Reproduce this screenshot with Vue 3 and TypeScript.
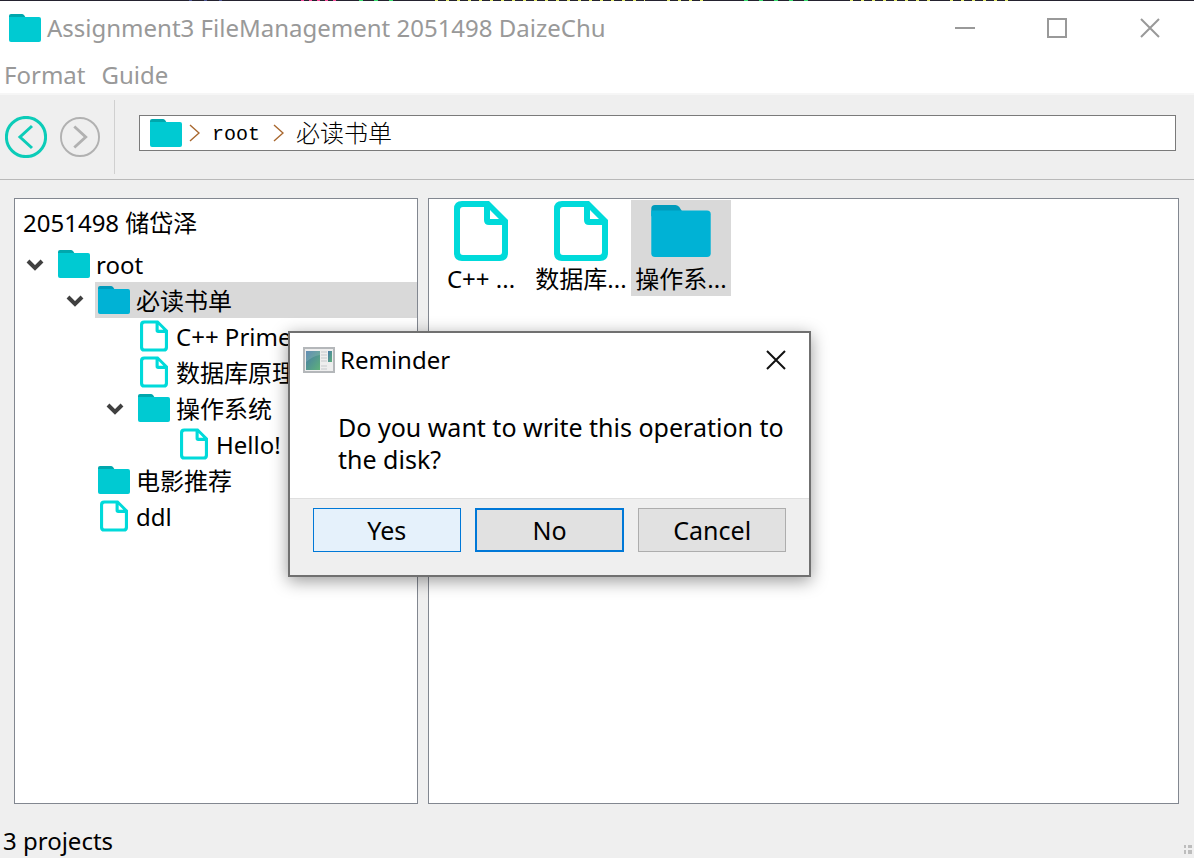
<script setup lang="ts">
import { ref } from 'vue'

type Kind = 'folder' | 'file'
interface TreeRow { label: string; kind: Kind; depth: number; open?: boolean; selected?: boolean }
interface GridItem { label: string; kind: Kind; selected?: boolean }

const rows = ref<TreeRow[]>([
  { label: 'root', kind: 'folder', depth: 0, open: true },
  { label: '必读书单', kind: 'folder', depth: 1, open: true, selected: true },
  { label: 'C++ Primer', kind: 'file', depth: 2 },
  { label: '数据库原理', kind: 'file', depth: 2 },
  { label: '操作系统', kind: 'folder', depth: 2, open: true },
  { label: 'Hello!', kind: 'file', depth: 3 },
  { label: '电影推荐', kind: 'folder', depth: 1 },
  { label: 'ddl', kind: 'file', depth: 1 },
])

const items = ref<GridItem[]>([
  { label: 'C++ ...', kind: 'file' },
  { label: '数据库...', kind: 'file' },
  { label: '操作系...', kind: 'folder', selected: true },
])
</script>

<template>
  <svg class="defs" aria-hidden="true">
    <symbol id="folder" viewBox="0 0 32 28">
      <path class="tab" d="M0 6V2Q0 0 2 0H13Q14 0 15 1L17 4V6Z" />
      <path d="M0 3H30Q32 3 32 5V26Q32 28 30 28H2Q0 28 0 26Z" />
    </symbol>
    <symbol id="file" viewBox="0 0 54 60">
      <path fill-rule="evenodd" d="M8 0H35L54 19V52Q54 60 46 60H8Q0 60 0 52V8Q0 0 8 0ZM9 6Q6 6 6 9V51Q6 54 9 54H45Q48 54 48 51V24H35Q30 24 30 19V6ZM36 9V18H45Z" />
    </symbol>
  </svg>
  <div class="window">
    <svg class="edge" viewBox="0 0 1194 1" preserveAspectRatio="none" aria-hidden="true">
      <path stroke="#24222f" d="M0 .5H1194" />
      <path stroke="#4b5592" stroke-dasharray="3 12" d="M189 .5H225" />
      <path stroke="#ff4fa0" stroke-dasharray="3 5" d="M301 .5H340" />
      <path stroke="#38e070" stroke-dasharray="4 11" d="M359 .5H395M744 .5H818" />
      <path stroke="#e8ee70" stroke-dasharray="3 8" d="M435 .5H645M667 .5H710M850 .5H930M950 .5H1014" />
    </svg>
    <header class="titlebar">
      <svg class="ico-folder"><use href="#folder" /></svg>
      <h1>Assignment3 FileManagement 2051498 DaizeChu</h1>
      <div class="controls">
        <button aria-label="Minimize"><svg viewBox="0 0 22 22"><path d="M1 11H21" /></svg></button>
        <button aria-label="Maximize"><svg viewBox="0 0 22 22"><path d="M2 2H20V20H2Z" /></svg></button>
        <button aria-label="Close"><svg viewBox="0 0 22 22"><path d="M2 2L20 20M20 2L2 20" /></svg></button>
      </div>
    </header>
    <nav class="menubar" aria-label="Menu">
      <button>Format</button>
      <button>Guide</button>
    </nav>
    <div class="toolbar">
      <div class="history">
        <button class="back" aria-label="Back"><svg viewBox="0 0 42 42"><circle cx="21" cy="21" r="19.6" /><path d="M27 10L15 21L27 32" /></svg></button>
        <button class="forward" aria-label="Forward"><svg viewBox="0 0 42 42"><circle cx="21" cy="21" r="20" /><path d="M15 10L27 21L15 32" stroke-width="3" /></svg></button>
      </div>
      <nav class="path" aria-label="Path">
        <svg class="ico-folder"><use href="#folder" /></svg>
        <svg class="sep" viewBox="0 0 12 20"><path d="M2 2L11 10L2 18" /></svg>
        <a class="latin" href="#root">root</a>
        <svg class="sep" viewBox="0 0 12 20"><path d="M2 2L11 10L2 18" /></svg>
        <a href="#books">必读书单</a>
      </nav>
    </div>
    <main class="content">
      <section class="tree" aria-label="Folders">
        <h2>2051498 储岱泽</h2>
        <ul>
          <li v-for="row in rows" :key="row.label" :class="['depth-' + row.depth, { selected: row.selected }]">
            <button v-if="row.open" class="toggle" :aria-label="'Collapse ' + row.label"><svg viewBox="0 0 18 12"><path d="M2 2L9 9L16 2" /></svg></button>
            <span v-else class="toggle"></span>
            <div class="entry">
              <svg :class="'ico-' + row.kind"><use :href="'#' + row.kind" /></svg>
              <span>{{ row.label }}</span>
            </div>
          </li>
        </ul>
      </section>
      <section class="files" aria-label="Files">
        <button v-for="item in items" :key="item.label" :class="['item', { selected: item.selected }]">
          <span class="pic"><svg :class="'big-' + item.kind"><use :href="'#' + item.kind" /></svg></span>
          <span>{{ item.label }}</span>
        </button>
      </section>
    </main>
    <footer class="status">
      <span>3 projects</span>
      <svg class="grip" viewBox="0 0 8 9"><path d="M0 0H2V3H0ZM4 0H8V3H4ZM0 5H2V9H0ZM4 5H8V9H4Z" /></svg>
    </footer>
    <div class="dialog" role="dialog" aria-labelledby="dialog-title">
      <div class="dialog-head">
        <svg class="app" viewBox="0 0 32 26">
          <defs><linearGradient id="screen" x1="0" y1="0" x2="1" y2="1"><stop offset="0" stop-color="#4679a8" /><stop offset="1" stop-color="#5fb27a" /></linearGradient></defs>
          <rect x="1" y="1" width="30" height="24" fill="#eeeeee" stroke="#b4b7ba" stroke-width="2" />
          <rect x="3" y="4" width="14" height="19" fill="url(#screen)" />
          <path d="M3 15Q10 9 17 8V4H3Z" fill="#fff" opacity=".15" />
          <path d="M18 5H24M18 8H24M18 11H24M18 14H24M18 19H24M18 22H24" stroke="#c6c9cc" />
          <rect x="25" y="4" width="4" height="11" fill="url(#screen)" />
        </svg>
        <h2 id="dialog-title">Reminder</h2>
        <button aria-label="Close"><svg viewBox="0 0 22 22"><path d="M2 2L20 20M20 2L2 20" /></svg></button>
      </div>
      <p>Do you want to write this operation to the disk?</p>
      <div class="actions">
        <button class="hover">Yes</button>
        <button class="default">No</button>
        <button>Cancel</button>
      </div>
    </div>
  </div>
</template>

<style>
body { margin: 0; }
</style>
<style scoped>
* { box-sizing: border-box; }
.defs { position: absolute; width: 0; height: 0; }
.window {
  position: relative;
  display: flex;
  flex-direction: column;
  min-height: 100vh;
  background: #efefef;
  color: #000;
  font: 24px/36px "Noto Sans", "Noto Sans CJK SC", sans-serif;
}
button { margin: 0; padding: 0; border: 0; background: none; font: inherit; color: inherit; }
svg { flex: none; display: block; }
h1, h2, p, ul { margin: 0; padding: 0; font: inherit; }
ul { list-style: none; }
.edge { width: 100%; height: 1px; }
.ico-folder { width: 32px; height: 28px; fill: #00cad2; color: #00a7ad; }
.ico-file { width: 28px; height: 32px; margin: 0 2px; fill: #00dada; }
.tab { fill: currentColor; }
.titlebar {
  display: flex;
  align-items: center;
  gap: 6px;
  height: 54px;
  padding-left: 9px;
  background: #fff;
  color: #999;
}
.controls { display: flex; margin-left: auto; }
.controls button { display: grid; place-items: center; width: 92px; height: 54px; }
.controls svg, .dialog-head button svg { width: 22px; height: 22px; fill: none; stroke: currentColor; stroke-width: 2; }
.controls button:last-child { width: 91px; padding-left: 3px; }
.menubar {
  display: flex;
  gap: 16px;
  height: 40px;
  padding: 2px 0 0 4px;
  border-bottom: 2px solid #f6f6f6;
  background: #fff;
  color: #999;
}
.toolbar { display: flex; height: 85px; padding: 5px 18px 5px 0; border-bottom: 1px solid #b9b9b9; }
.history { display: flex; align-items: center; gap: 13px; width: 115px; padding-left: 5px; border-right: 1px solid #d0d0d0; }
.history svg { fill: none; stroke: currentColor; }
.back { color: #0cccb8; }
.back svg { width: 42px; height: 42px; stroke-width: 3; }
.forward { color: #b1b1b1; }
.forward svg { width: 40px; height: 40px; stroke-width: 2; }
.path {
  display: flex;
  flex: 1;
  align-items: center;
  height: 36px;
  margin: 15px 0 0 24px;
  padding-left: 10px;
  border: 1px solid #7a7a7a;
  background: #fff;
}
.path a { color: inherit; text-decoration: none; font-weight: 300; }
.path .latin { padding-top: 4px; font: 20px/30px "Liberation Mono", monospace; margin: 0 12px; }
.sep { width: 12px; height: 20px; fill: none; stroke: #a8672e; stroke-width: 1.4; }
.path .ico-folder { margin-right: 6px; }
.path .sep + a:last-child { margin-left: 12px; }
.content { display: flex; flex: 1; gap: 10px; padding: 18px 15px 0 14px; }
.tree { width: 404px; border: 1px solid #828790; background: #fff; }
.tree h2 { height: 47px; padding: 6px 8px; }
.tree li { display: flex; }
.depth-1 { padding-left: 40px; }
.depth-2 { padding-left: 80px; }
.depth-3 { padding-left: 120px; }
.toggle { display: grid; place-items: center; flex: none; width: 40px; height: 38px; margin-bottom: -2px; }
.toggle svg { width: 18px; height: 12px; fill: none; stroke: #404040; stroke-width: 4; }
.entry { display: flex; flex: 1; align-items: center; gap: 6px; height: 36px; padding-left: 3px; }
.entry span { padding-top: 2px; }
.selected .entry { background: #d9d9d9; }
.selected svg { fill: #00b2d5; color: #009bbb; }
.selected .toggle svg { fill: none; }
.files { display: flex; flex: 1; align-items: flex-start; padding: 1px 2px; border: 1px solid #828790; background: #fff; }
.item { width: 100px; height: 96px; white-space: nowrap; }
.item.selected { background: #d9d9d9; }
.item > span { display: grid; justify-content: center; line-height: 34px; }
.item > .pic { height: 62px; align-content: center; }
.big-file { width: 54px; height: 60px; fill: #00dada; }
.big-folder { width: 60px; height: 52px; }
.status { display: flex; align-items: flex-end; justify-content: space-between; height: 54px; padding: 0 2px 0 3px; line-height: 34px; }
.grip { width: 8px; height: 9px; fill: #bdbdbd; margin-bottom: 4px; }
.dialog {
  position: absolute;
  top: 331px;
  left: 288px;
  width: 523px;
  border: 2px solid #707070;
  background: #fff;
  box-shadow: 0 4px 16px rgba(0, 0, 0, .4);
  font-size: 25px;
}
.dialog-head { display: flex; align-items: center; gap: 5px; height: 54px; padding: 0 0 0 13px; font-size: 24px; }
.dialog-head .app { width: 32px; height: 26px; }
.dialog-head button { margin: 0 22px 0 auto; color: #111; }
.dialog p { height: 111px; padding: 24px 20px 0 48px; line-height: 32px; }
.actions { display: flex; gap: 14px; padding: 9px 23px 23px; border-top: 1px solid #dfdfdf; background: #efefef; }
.actions button { flex: 1; height: 44px; border: 1px solid #adadad; background: #e1e1e1; }
.actions .hover { border-color: #0078d7; background: #e5f1fb; }
.actions .default { border: 2px solid #0078d7; }
</style>
